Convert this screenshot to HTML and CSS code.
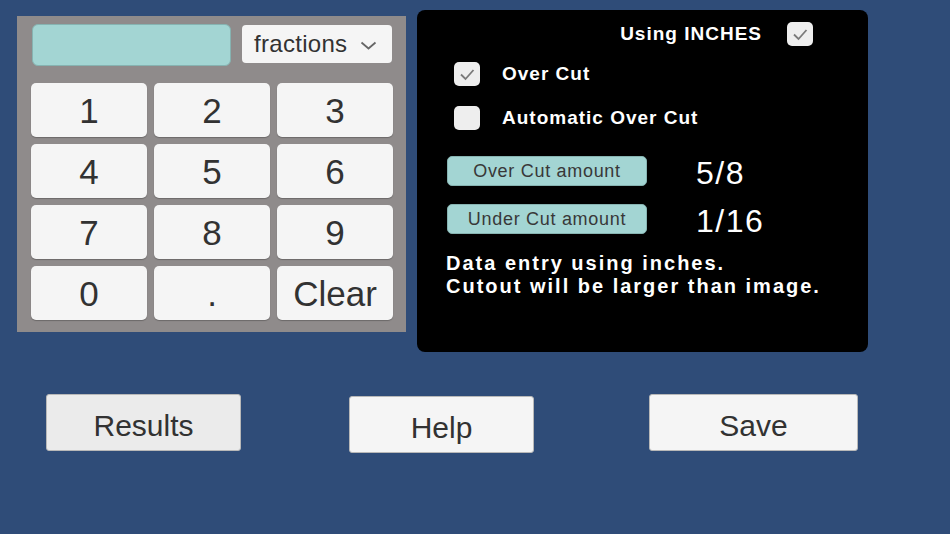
FILE: index.html
```html
<!DOCTYPE html>
<html>
<head>
<meta charset="utf-8">
<link rel="stylesheet" href="styles.css">
</head>
<body>
<div class="screen">
  <div class="top">
    <div class="keypad">
      <div class="entry-row">
        <div class="entry"></div>
        <div class="dropdown">
          <span class="dd-label">fractions</span>
          <svg class="chev" width="17" height="9" viewBox="0 0 17 9"><polyline points="1.5,1.5 8.5,7.5 15.5,1.5" fill="none" stroke="#666" stroke-width="1.8"/></svg>
        </div>
      </div>
      <div class="keys">
        <div class="key">1</div><div class="key">2</div><div class="key">3</div>
        <div class="key">4</div><div class="key">5</div><div class="key">6</div>
        <div class="key">7</div><div class="key">8</div><div class="key">9</div>
        <div class="key">0</div><div class="key">.</div><div class="key">Clear</div>
      </div>
    </div>
    <div class="settings">
      <div class="row-units">
        <span class="label">Using INCHES</span>
        <span class="box"><svg width="26" height="24" viewBox="0 0 26 24"><polyline points="7,12.5 11.5,17 19.5,8" fill="none" stroke="#7a7a7a" stroke-width="1.8"/></svg></span>
      </div>
      <div class="row-check first">
        <span class="box"><svg width="26" height="24" viewBox="0 0 26 24"><polyline points="7,12.5 11.5,17 19.5,8" fill="none" stroke="#7a7a7a" stroke-width="1.8"/></svg></span>
        <span class="label">Over Cut</span>
      </div>
      <div class="row-check second">
        <span class="box"></span>
        <span class="label">Automatic Over Cut</span>
      </div>
      <div class="row-amount first">
        <div class="amount-btn">Over Cut amount</div>
        <span class="value">5/8</span>
      </div>
      <div class="row-amount second">
        <div class="amount-btn">Under Cut amount</div>
        <span class="value">1/16</span>
      </div>
      <p class="note">Data entry using inches.<br>Cutout will be larger than image.</p>
    </div>
  </div>
  <div class="bottom">
    <div class="btn results">Results</div>
    <div class="btn help">Help</div>
    <div class="btn save">Save</div>
  </div>
</div>
</body>
</html>
```

FILE: styles.css
```css
html, body {
  margin: 0;
  padding: 0;
}
body {
  background: #2f4c78;
  font-family: "Liberation Sans", Arial, sans-serif;
}
.screen {
  width: 950px;
  height: 534px;
  overflow: hidden;
}
.top {
  display: flex;
  align-items: flex-start;
  padding-left: 17px;
}
.keypad {
  box-sizing: border-box;
  width: 389px;
  height: 316px;
  margin-top: 16px;
  padding: 8px 14px 0 14px;
  background: #8f8b8b;
}
.entry-row {
  display: flex;
  align-items: flex-start;
  gap: 11px;
}
.entry {
  box-sizing: border-box;
  width: 199px;
  height: 42px;
  margin-left: 1px;
  background: #a3d5d3;
  border: 1px solid #86b3b1;
  border-radius: 6px;
}
.dropdown {
  box-sizing: border-box;
  width: 150px;
  height: 38px;
  margin-top: 1px;
  background: #f5f5f5;
  border-radius: 4px;
  display: flex;
  align-items: center;
  padding-left: 12px;
  gap: 13px;
  color: #323232;
  font-size: 24px;
  letter-spacing: 0.3px;
}
.dd-label {
  line-height: 1;
}
.chev {
  display: block;
  margin-top: 2px;
}
.keys {
  margin-top: 17px;
  display: grid;
  grid-template-columns: 116px 116px 116px;
  grid-auto-rows: 54px;
  column-gap: 7px;
  row-gap: 7px;
}
.key {
  background: #f5f5f5;
  border-radius: 5px;
  box-shadow: 0 1px 1px rgba(0,0,0,0.25);
  display: flex;
  align-items: center;
  justify-content: center;
  color: #323232;
  font-size: 35px;
  line-height: 1;
}
.settings {
  box-sizing: border-box;
  width: 451px;
  height: 342px;
  margin-top: 10px;
  margin-left: 11px;
  background: #000;
  border-radius: 8px;
  padding-top: 12px;
  color: #fff;
}
.label {
  font-weight: bold;
  font-size: 19px;
  letter-spacing: 1px;
}
.box {
  box-sizing: border-box;
  width: 26px;
  height: 24px;
  background: #eeeeee;
  border-radius: 5px;
  display: block;
  flex: none;
}
.box svg {
  display: block;
}
.row-units {
  display: flex;
  align-items: center;
  justify-content: flex-end;
  gap: 25px;
  padding-right: 55px;
  height: 24px;
}
.row-check {
  display: flex;
  align-items: center;
  gap: 22px;
  padding-left: 37px;
  height: 24px;
}
.row-check.first {
  margin-top: 16px;
}
.row-check.second {
  margin-top: 20px;
}
.row-amount {
  display: flex;
  align-items: flex-start;
  padding-left: 30px;
  gap: 49px;
  height: 30px;
}
.row-amount.first {
  margin-top: 26px;
}
.row-amount.second {
  margin-top: 18px;
}
.amount-btn {
  box-sizing: border-box;
  width: 200px;
  height: 30px;
  background: #a3d5d3;
  border: 1px solid #86b3b1;
  border-radius: 5px;
  color: #383838;
  font-size: 18px;
  letter-spacing: 0.7px;
  display: flex;
  align-items: center;
  justify-content: center;
}
.value {
  font-size: 32px;
  letter-spacing: 1.5px;
  line-height: 30px;
  margin-top: 2px;
}
.note {
  margin: 18px 0 0 0;
  padding-left: 29px;
  font-weight: bold;
  font-size: 20px;
  line-height: 23px;
  letter-spacing: 2px;
}
.bottom {
  display: flex;
  align-items: flex-start;
  margin-top: 42px;
  padding-left: 46px;
}
.btn {
  box-sizing: border-box;
  height: 57px;
  background: #f5f5f5;
  border: 1px solid #b8b8b8;
  border-radius: 3px;
  display: flex;
  align-items: center;
  justify-content: center;
  color: #323232;
  font-size: 30px;
  padding-top: 7px;
}
.results {
  width: 195px;
  background: #ebebeb;
}
.help {
  width: 185px;
  margin-left: 108px;
  margin-top: 2px;
}
.save {
  width: 209px;
  margin-left: 115px;
}
```
